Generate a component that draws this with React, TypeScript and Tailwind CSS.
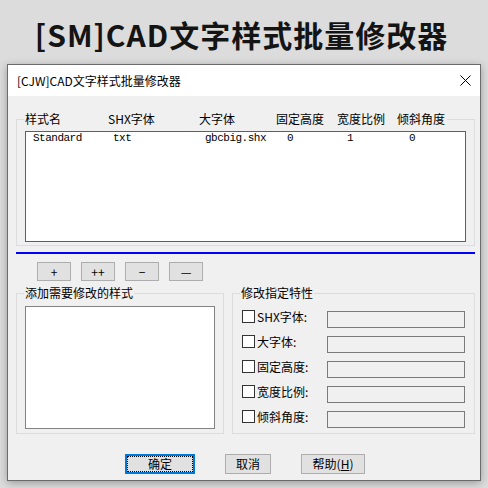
export default function App() {
  const headers: [string, string][] = [
    ["样式名", "w-[83px]"],
    ["SHX字体", "w-[91px]"],
    ["大字体", "w-[77px]"],
    ["固定高度", "w-[61px]"],
    ["宽度比例", "w-[60px]"],
    ["倾斜角度", ""],
  ];
  const row: [string, string][] = [
    ["Standard", "w-[80px]"],
    ["txt", "w-[92px]"],
    ["gbcbig.shx", "w-[82px]"],
    ["0", "w-[60px]"],
    ["1", "w-[62px]"],
    ["0", ""],
  ];
  const props = ["SHX字体:", "大字体:", "固定高度:", "宽度比例:", "倾斜角度:"];
  return (
    <div className="w-[488px] h-[488px] bg-[#dcdcdc] overflow-hidden font-['Noto_Sans_CJK_SC','Noto_Sans',sans-serif] text-black">
      <div className="h-[64px] flex items-center justify-center pt-[3px] pr-[5px]">
        <h1 className="text-[30px] font-bold tracking-[1px] text-[#141414] leading-none">
          [SM]CAD文字样式批量修改器
        </h1>
      </div>
      <div className="ml-[7px] w-[474px] h-[417px] border border-[#6b6b6b] flex flex-col shadow-[0_2px_8px_rgba(0,0,0,0.3)]">
        <div className="h-[31px] bg-white flex items-center justify-between pl-[9px] pr-[9px] shrink-0">
          <span className="text-[12px] leading-none">[CJW]CAD文字样式批量修改器</span>
          <svg width="11" height="11" viewBox="0 0 11 11">
            <path d="M0.5 0.5 L10.5 10.5 M10.5 0.5 L0.5 10.5" stroke="#000" strokeWidth="1" />
          </svg>
        </div>
        <div className="flex-1 bg-[#f0f0f0] pl-[8px] flex flex-col">
          {/* group 1 */}
          <div className="relative mt-[23px] w-[459px] h-[127px] border border-[#dcdcdc] shrink-0">
            <div className="absolute left-[7px] top-[-8px] flex bg-[#f0f0f0] pl-[1px] pr-[2px] text-[12px] leading-[14px]">
              {headers.map(([t, w], i) => (
                <span key={i} className={w}>
                  {t}
                </span>
              ))}
            </div>
            <div className="mt-[11px] ml-[8px] w-[441px] h-[111px] border border-[#0078d7] bg-white">
              <div className="flex pl-[7px] font-['Liberation_Mono',monospace] text-[11px] tracking-[-0.5px] leading-[13px] pt-[0px]">
                {row.map(([t, w], i) => (
                  <span key={i} className={w}>
                    {t}
                  </span>
                ))}
              </div>
            </div>
          </div>
          <div className="mt-[6px] h-[2px] w-[459px] bg-[#0000ff] shrink-0" />
          <div className="mt-[8px] flex gap-[10px] pl-[21px] shrink-0">
            {["+", "++", "−", "—"].map((t, i) => (
              <div
                key={i}
                className="w-[34px] h-[19px] border border-[#adadad] bg-[#e1e1e1] flex items-center justify-center text-[12px] leading-none"
              >
                {t}
              </div>
            ))}
          </div>
          <div className="mt-[12px] flex gap-[8px] shrink-0">
            <div className="relative w-[208px] h-[141px] border border-[#dcdcdc]">
              <span className="absolute left-[7px] top-[-8px] bg-[#f0f0f0] px-[1px] text-[12px] leading-[14px]">
                添加需要修改的样式
              </span>
              <div className="mt-[12px] ml-[8px] w-[190px] h-[123px] border border-[#828282] bg-white" />
            </div>
            <div className="relative w-[243px] h-[141px] border border-[#dcdcdc]">
              <span className="absolute left-[7px] top-[-8px] bg-[#f0f0f0] px-[1px] text-[12px] leading-[14px]">
                修改指定特性
              </span>
              <div className="pt-[16px] pl-[9px] flex flex-col">
                {props.map((p, i) => (
                  <div key={i} className="h-[25px] flex items-start">
                    <div className="w-[13px] h-[13px] border border-[#333333] bg-white shrink-0" />
                    <span className="ml-[2px] w-[70px] text-[12px] leading-[13px]">{p}</span>
                    <div className="mt-[1px] w-[138px] h-[17px] border border-[#7a7a7a] bg-[#f0f0f0]" />
                  </div>
                ))}
              </div>
            </div>
          </div>
          <div className="mt-[20px] flex pl-[109px] shrink-0">
            <div className="w-[70px] h-[20px] border-2 border-[#0078d7] bg-[#e1e1e1] flex items-center justify-center text-[12px] leading-none outline-1 outline-dotted outline-black outline-offset-[-3px]">
              确定
            </div>
            <div className="ml-[30px] w-[46px] h-[20px] border border-[#adadad] bg-[#e1e1e1] flex items-center justify-center text-[12px] leading-none">
              取消
            </div>
            <div className="ml-[30px] w-[64px] h-[20px] border border-[#adadad] bg-[#e1e1e1] flex items-center justify-center text-[12px] leading-none">
              帮助(<span className="underline">H</span>)
            </div>
          </div>
        </div>
      </div>
    </div>
  );
}
